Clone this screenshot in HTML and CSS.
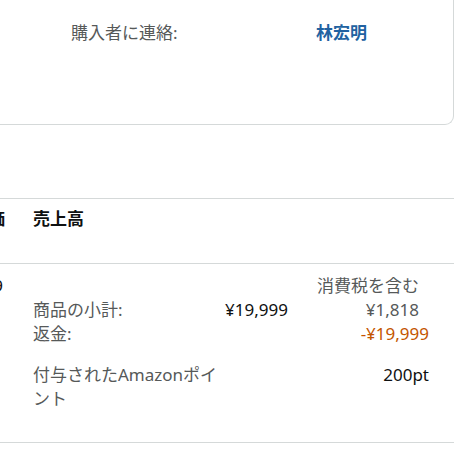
FILE: index.html
```html
<!DOCTYPE html>
<html lang="ja">
<head>
<meta charset="utf-8">
<title>注文詳細</title>
<link rel="stylesheet" href="styles.css">
</head>
<body>
  <section class="card">
    <div class="contact">
      <span class="contact-label">購入者に連絡:</span>
      <a class="contact-name" href="#">林宏明</a>
    </div>
  </section>

  <section class="table">
    <div class="cell head first">単価</div>
    <div class="cell head">売上高</div>
    <div class="cell body first"><span class="unit">¥19,999</span></div>
    <div class="cell body sales">
      <div class="row tax-head"><span class="tax">消費税を含む</span></div>
      <div class="row">
        <span class="label">商品の小計:</span>
        <span class="amount">¥19,999</span>
        <span class="tax">¥1,818</span>
      </div>
      <div class="row">
        <span class="label">返金:</span>
        <span class="refund">-¥19,999</span>
      </div>
      <div class="row points">
        <span class="label">付与されたAmazonポイント</span>
        <span class="pt">200pt</span>
      </div>
    </div>
  </section>
</body>
</html>
```

FILE: styles.css
```css
html, body {
  margin: 0;
  padding: 0;
  background: #ffffff;
  overflow: hidden;
}

body {
  font-family: "Noto Sans", "Noto Sans CJK JP", sans-serif;
  font-size: 17px;
  line-height: 24px;
  color: #0f1111;
  width: 460px;
}

.card {
  margin-right: 6px;
  border: 1px solid #d5d9d9;
  border-top: 0;
  border-left: 0;
  border-radius: 0 0 9px 0;
  padding: 21px 0 79px 0;
}

.contact {
  display: flex;
  padding-left: 71px;
}

.contact-label {
  width: 245px;
  color: #565959;
}

.contact-name {
  color: #2162a1;
  font-weight: 700;
  text-decoration: none;
}

.table {
  margin: 73px 6px 0 -100px;
  display: grid;
  grid-template-columns: 105px 1fr;
  border-bottom: 1px solid #d5d9d9;
}

.cell {
  border-top: 1px solid #d5d9d9;
}

.head {
  font-weight: 700;
  padding: 8px 0 32px 28px;
}

.head.first,
.body.first {
  padding-left: 0;
  text-align: right;
  white-space: nowrap;
  overflow: hidden;
}

.body {
  padding: 10px 25px 31px 28px;
}

.body.first {
  padding-right: 2px;
}

.unit {
  color: #0f1111;
}

.row {
  display: flex;
}

.tax-head {
  justify-content: flex-end;
}

.label {
  width: 192px;
  flex: none;
  color: #565959;
}

.amount {
  color: #0f1111;
}

.tax {
  margin-left: auto;
  padding-right: 10px;
  color: #565959;
}

.refund {
  margin-left: auto;
  color: #c45500;
}

.points {
  margin-top: 17px;
}

.pt {
  margin-left: auto;
  color: #0f1111;
}
```
